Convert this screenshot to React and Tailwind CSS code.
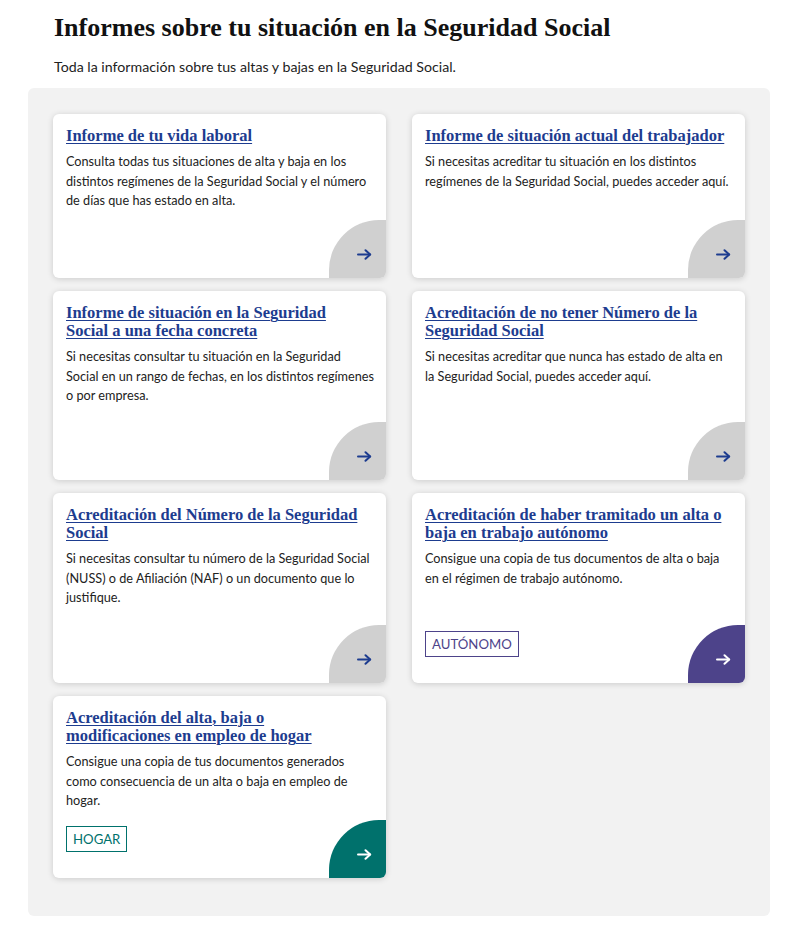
import React from "react";

const serif = { fontFamily: '"Liberation Serif", "DejaVu Serif", serif' };

const cards = [
  {
    title: ["Informe de tu vida laboral"],
    desc: [
      "Consulta todas tus situaciones de alta y baja en los",
      "distintos regímenes de la Seguridad Social y el número",
      "de días que has estado en alta.",
    ],
  },
  {
    title: ["Informe de situación actual del trabajador"],
    desc: [
      "Si necesitas acreditar tu situación en los distintos",
      "regímenes de la Seguridad Social, puedes acceder aquí.",
    ],
  },
  {
    title: ["Informe de situación en la Seguridad", "Social a una fecha concreta"],
    desc: [
      "Si necesitas consultar tu situación en la Seguridad",
      "Social en un rango de fechas, en los distintos regímenes",
      "o por empresa.",
    ],
  },
  {
    title: ["Acreditación de no tener Número de la", "Seguridad Social"],
    desc: [
      "Si necesitas acreditar que nunca has estado de alta en",
      "la Seguridad Social, puedes acceder aquí.",
    ],
  },
  {
    title: ["Acreditación del Número de la Seguridad", "Social"],
    desc: [
      "Si necesitas consultar tu número de la Seguridad Social",
      "(NUSS) o de Afiliación (NAF) o un documento que lo",
      "justifique.",
    ],
  },
  {
    title: ["Acreditación de haber tramitado un alta o", "baja en trabajo autónomo"],
    desc: [
      "Consigue una copia de tus documentos de alta o baja",
      "en el régimen de trabajo autónomo.",
    ],
    tag: "AUTÓNOMO",
    variant: "purple",
  },
  {
    title: ["Acreditación del alta, baja o", "modificaciones en empleo de hogar"],
    desc: [
      "Consigue una copia de tus documentos generados",
      "como consecuencia de un alta o baja en empleo de",
      "hogar.",
    ],
    tag: "HOGAR",
    variant: "teal",
  },
];

function Arrow({ color }) {
  return (
    <svg width="15" height="11" viewBox="0 0 15 11" fill="none">
      <path d="M1 5.5H13" stroke={color} strokeWidth="2" strokeLinecap="round" />
      <path d="M8.5 1.2L13.2 5.5L8.5 9.8" stroke={color} strokeWidth="2" strokeLinecap="round" strokeLinejoin="round" />
    </svg>
  );
}

function Lines({ lines }) {
  return lines.map((l, i) => (
    <React.Fragment key={i}>
      {i > 0 && <br />}
      {l}
    </React.Fragment>
  ));
}

function Card({ title, desc, tag, variant }) {
  const circle =
    variant === "purple"
      ? "bg-[#4d438a]"
      : variant === "teal"
      ? "bg-[#00716c]"
      : "bg-[#d0d0d0]";
  const arrowColor = variant ? "#ffffff" : "#1d3c8f";
  const tagCls =
    variant === "purple"
      ? "border-[#4d438a] text-[#4d438a]"
      : "border-[#00716c] text-[#00716c]";
  return (
    <div className="relative flex flex-col overflow-hidden rounded-[6px] bg-white px-[13px] pt-[13px] pb-[26px] shadow-[0_1px_6px_rgba(0,0,0,0.16)]">
      <h3
        style={serif}
        className="whitespace-nowrap text-[16.5px] font-bold leading-[18px] text-[#1d3c8f]"
      >
        <a href="#" className="underline decoration-1 underline-offset-[2px]">
          <Lines lines={title} />
        </a>
      </h3>
      <p className="mt-[7px] whitespace-nowrap text-[12.7px] leading-[19.5px] text-[#222]">
        <Lines lines={desc} />
      </p>
      {tag && (
        <div className="mt-auto">
          <span className={`inline-block border px-[6px] text-[13.2px] leading-[24px] ${tagCls}`}>{tag}</span>
        </div>
      )}
      <div
        className={`absolute right-0 bottom-0 flex h-[58px] w-[57px] items-center justify-center rounded-tl-[50px] pt-[10px] pl-[13px] ${circle}`}
      >
        <Arrow color={arrowColor} />
      </div>
    </div>
  );
}

export default function App() {
  return (
    <div
      className="w-[800px] bg-white pb-[22px] text-[#1a1a1a]"
      style={{ fontFamily: 'Lato, "Noto Sans", sans-serif' }}
    >
      <div className="ml-[28px] w-[742px]">
        <h1 style={serif} className="px-[26px] pt-[12px] text-[26px] font-bold leading-[32px] text-[#111]">
          Informes sobre tu situación en la Seguridad Social
        </h1>
        <p className="mt-[13px] px-[26px] text-[14.2px] leading-[20px] text-[#222]">
          Toda la información sobre tus altas y bajas en la Seguridad Social.
        </p>
        <div className="mt-[11px] rounded-[6px] bg-[#f2f2f2] px-[25px] pt-[26px] pb-[38px]">
          <div className="grid grid-cols-2 grid-rows-[164px_189px_190px_182px] gap-x-[26px] gap-y-[13px]">
            {cards.map((c) => (
              <Card key={c.title.join(" ")} {...c} />
            ))}
          </div>
        </div>
      </div>
    </div>
  );
}
